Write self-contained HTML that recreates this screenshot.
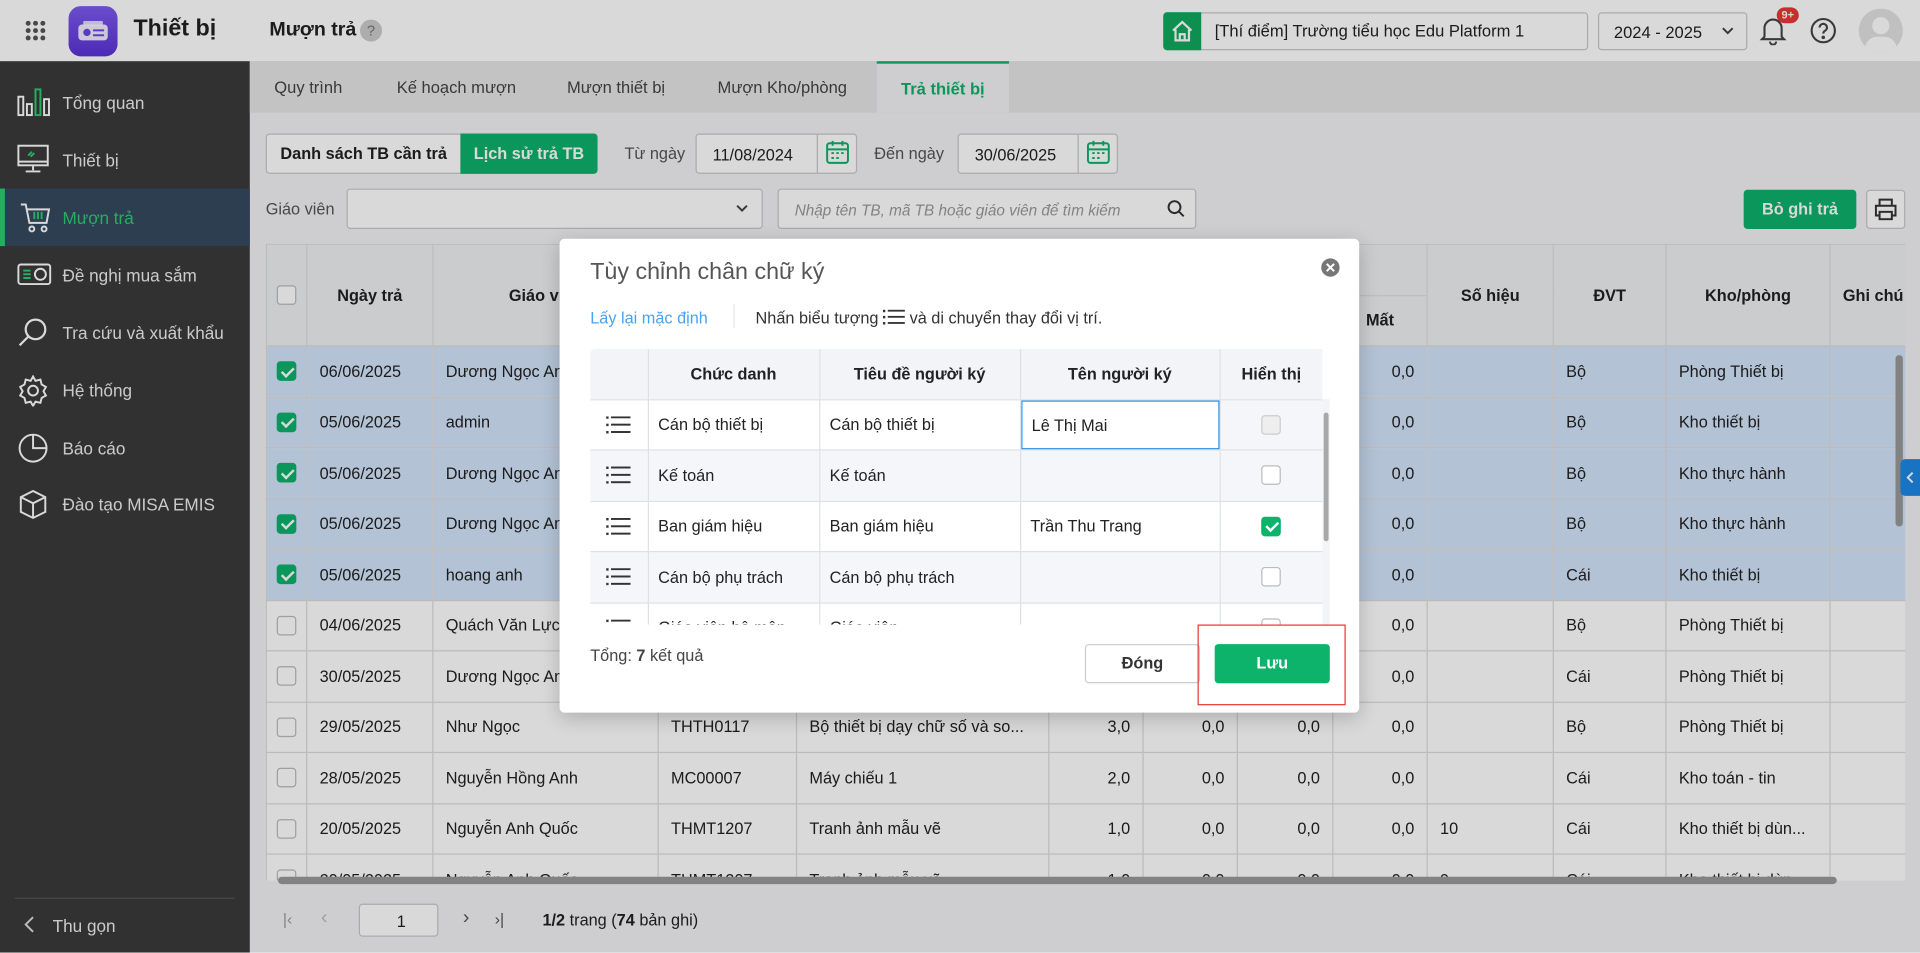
<!DOCTYPE html>
<html><head><meta charset="utf-8">
<style>
*{box-sizing:border-box;margin:0;padding:0}
html,body{width:1920px;height:953px;overflow:hidden;background:#f2f3f5}
body{font-family:"Liberation Sans","Noto Sans CJK SC",sans-serif;color:#222}
#root{position:absolute;left:0;top:0;width:1568px;height:778px;transform:scale(1.22449);transform-origin:0 0;overflow:hidden;font-size:13.3px;background:#f2f3f5}
.a{position:absolute}
.hdr{left:0;top:0;width:1568px;height:50px;background:#fff;box-shadow:0 1px 3px rgba(0,0,0,.15)}
.side{left:0;top:50px;width:204px;height:728px;background:#3a3a3a;color:#fff}
.si{position:absolute;left:0;width:204px;height:47px;display:flex;align-items:center;padding-left:51px;font-size:14px;color:#eee}
.si svg{position:absolute;left:14px;top:11px}
.tabs{left:204px;top:50px;width:1364px;height:42px;background:#e6e6e6}
.tab{position:absolute;top:0;height:42px;line-height:44px;font-size:13.5px;color:#444}
.inp{position:absolute;background:#fff;border:1px solid #c9c9c9;border-radius:3px;height:33px}
table{border-collapse:collapse;table-layout:fixed}
.bt td,.bt th{border:1px solid #dcdcdc;height:41.5px;padding:0 10px;white-space:nowrap;overflow:hidden;text-overflow:ellipsis;font-size:13.3px}
.bt td:first-child,.bt th:first-child{padding:0;text-align:center}
.bt th{background:#eef0f3;font-weight:bold;text-align:center}
.bt td.n{text-align:right}
.bt tr.sel td{background:#d3e4fb}
.bt tr td{background:#fff}
.cb{display:inline-block;width:16px;height:16px;border:1px solid #bbb;border-radius:3px;background:#fff;vertical-align:middle;position:relative}
.cb.on{background:#0db26b;border-color:#0db26b}
.cb.on:after{content:"";position:absolute;left:5px;top:1.5px;width:4px;height:8px;border:solid #fff;border-width:0 2px 2px 0;transform:rotate(45deg)}
.ov{left:0;top:0;width:1568px;height:778px;background:rgba(0,0,0,.15)}
.modal{left:457px;top:195px;width:653px;height:387px;background:#fff;border-radius:4px;box-shadow:0 4px 16px rgba(0,0,0,.2)}
.mt td,.mt th{border-bottom:1px solid #dde0e6;border-right:1px solid #dde0e6;height:41.5px;padding:0 8px;font-size:13.3px;white-space:nowrap;overflow:hidden}
.mt th{background:#f2f4f8;font-weight:bold;height:41px}
.mt tr.g td{background:#f5f6fa}
.hb{display:block;margin:0 auto;width:20px}
.btn{position:absolute;border-radius:3px;text-align:center;font-weight:bold;font-size:13.3px}
</style></head><body>
<div id="root">

<div class="a hdr">
 <svg class="a" style="left:20px;top:16px" width="18" height="18" viewBox="0 0 18 18" fill="#555"><circle cx="3" cy="3" r="2"/><circle cx="9" cy="3" r="2"/><circle cx="15" cy="3" r="2"/><circle cx="3" cy="9" r="2"/><circle cx="9" cy="9" r="2"/><circle cx="15" cy="9" r="2"/><circle cx="3" cy="15" r="2"/><circle cx="9" cy="15" r="2"/><circle cx="15" cy="15" r="2"/></svg>
 <div class="a" style="left:56px;top:5px;width:40px;height:41px;border-radius:10px;background:linear-gradient(180deg,#7d5cf0,#5b32d6)"></div>
 <svg class="a" style="left:63px;top:17px" width="26" height="17" viewBox="0 0 26 17"><rect x="1" y="3" width="24" height="13" rx="3" fill="#fff" opacity=".9"/><rect x="5" y="0" width="16" height="4" rx="1" fill="#fff" opacity=".8"/><circle cx="8" cy="9.5" r="3" fill="#6a46e2"/><rect x="13" y="7" width="9" height="1.6" fill="#6a46e2"/><rect x="13" y="11" width="9" height="1.6" fill="#6a46e2"/></svg>
 <div class="a" style="left:109px;top:13px;font-size:19px;font-weight:bold">Thiết bị</div>
 <div class="a" style="left:220px;top:16px;font-size:16px;font-weight:bold">Mượn trả</div>
 <div class="a" style="left:294px;top:16px;width:18px;height:18px;border-radius:9px;background:#ccc;color:#777;font-size:12px;text-align:center;line-height:18px">?</div>
 <div class="a" style="left:950px;top:10px;width:347px;height:31px;border:1px solid #c9c9c9;border-radius:3px;background:#fff"></div>
 <div class="a" style="left:950px;top:10px;width:31px;height:31px;background:#10a85f;border-radius:3px 0 0 3px"></div>
 <svg class="a" style="left:955px;top:15px" width="21" height="21" viewBox="0 0 21 21" fill="none" stroke="#fff" stroke-width="1.8"><path d="M3 10L10.5 3L18 10M5 9v9h11V9M8.5 18v-5h4v5"/></svg>
 <div class="a" style="left:992px;top:18px;font-size:13.5px">[Thí điểm] Trường tiểu học Edu Platform 1</div>
 <div class="a" style="left:1305px;top:10px;width:122px;height:31px;border:1px solid #c9c9c9;border-radius:3px;background:#fff;padding:8px 0 0 12px;font-size:13.5px">2024 - 2025</div>
 <svg class="a" style="left:1405px;top:21px" width="12" height="8" viewBox="0 0 12 8"><path d="M2 2l4 4 4-4" stroke="#444" stroke-width="1.6" fill="none"/></svg>
 <svg class="a" style="left:1437px;top:13px" width="22" height="24" viewBox="0 0 22 24" fill="none" stroke="#444" stroke-width="1.7"><path d="M4 17V10a7 7 0 0114 0v7l2 2H2z"/><path d="M8.5 21a2.5 2.5 0 005 0"/></svg>
 <div class="a" style="left:1451px;top:6px;width:18px;height:13px;border-radius:7px;background:#e53935;color:#fff;font-size:9px;text-align:center;line-height:13px;font-weight:bold">9+</div>
 <svg class="a" style="left:1478px;top:14px" width="22" height="22" viewBox="0 0 22 22" fill="none" stroke="#444" stroke-width="1.7"><circle cx="11" cy="11" r="9.5"/><path d="M8 8.5a3 3 0 115 2.2c-1.2.8-2 1.3-2 2.8"/><circle cx="11" cy="16.5" r=".6" fill="#444"/></svg>
 <div class="a" style="left:1518px;top:7px;width:36px;height:36px;border-radius:18px;background:#e2e2e2;overflow:hidden"><div style="position:absolute;left:11px;top:7px;width:14px;height:14px;border-radius:7px;background:#fff"></div><div style="position:absolute;left:5px;top:23px;width:26px;height:20px;border-radius:13px;background:#fff"></div></div>
</div>

<div class="a side">
 <div class="si" style="top:10px"><svg width="28" height="24" viewBox="0 0 28 24" fill="none" stroke="#fff" stroke-width="1.6"><rect x="1" y="8" width="4" height="15"/><rect x="8" y="14" width="4" height="9"/><rect x="15" y="2" width="4" height="21" stroke="#2ecc71"/><rect x="22" y="10" width="4" height="13"/></svg>Tổng quan</div>
 <div class="si" style="top:57px"><svg width="26" height="24" viewBox="0 0 26 24" fill="none" stroke="#fff" stroke-width="1.6"><rect x="1" y="1" width="24" height="16"/><path d="M1 14h24M13 17v4M7 22h12"/><path d="M9 9l3-3M11 10l3-3" stroke="#2ecc71"/></svg>Thiết bị</div>
 <div class="si" style="top:104px;background:#34495e;color:#2ecc71;border-left:4px solid #2ecc71;padding-left:47px"><svg style="left:12px" width="26" height="26" viewBox="0 0 26 26" fill="none" stroke="#fff" stroke-width="1.6"><path d="M1 2h4l3 15h14l2-11H6"/><circle cx="10" cy="22" r="2"/><circle cx="20" cy="22" r="2"/><path d="M12 8v6M15 8v6M18 8v6" stroke="#2ecc71"/></svg>Mượn trả</div>
 <div class="si" style="top:151px"><svg width="28" height="24" viewBox="0 0 28 24" fill="none" stroke="#fff" stroke-width="1.6"><rect x="1" y="4" width="26" height="16" rx="2"/><circle cx="19" cy="12" r="4.5"/><path d="M5 9h6M5 12h6M5 15h6" stroke="#2ecc71"/></svg>Đề nghị mua sắm</div>
 <div class="si" style="top:198px"><svg width="26" height="26" viewBox="0 0 26 26" fill="none" stroke="#fff" stroke-width="1.8"><circle cx="15" cy="10" r="8"/><path d="M9 16l-7 7"/></svg>Tra cứu và xuất khẩu</div>
 <div class="si" style="top:245px"><svg width="26" height="26" viewBox="0 0 26 26" fill="none" stroke="#fff" stroke-width="1.6"><circle cx="13" cy="13" r="4"/><path d="M13 1.5l2 3.5 4-1 1 4 3.5 2-2 3.5 2 3.5-3.5 2-1 4-4-1-2 3.5-2-3.5-4 1-1-4-3.5-2 2-3.5-2-3.5 3.5-2 1-4 4 1z"/></svg>Hệ thống</div>
 <div class="si" style="top:292px"><svg width="26" height="26" viewBox="0 0 26 26" fill="none" stroke="#fff" stroke-width="1.6"><circle cx="13" cy="13" r="11"/><path d="M13 2v11h11"/></svg>Báo cáo</div>
 <div class="si" style="top:338px"><svg width="26" height="26" viewBox="0 0 26 26" fill="none" stroke="#fff" stroke-width="1.6"><path d="M13 2l10 5v12l-10 5-10-5V7z M3 7l10 5 10-5M13 12v12"/></svg>Đào tạo MISA EMIS</div>
 <div class="a" style="left:12px;top:683px;width:180px;height:1px;background:#555"></div>
 <svg class="a" style="left:18px;top:697px" width="12" height="16" viewBox="0 0 12 16"><path d="M9 2L3 8l6 6" stroke="#ddd" stroke-width="1.6" fill="none"/></svg>
 <div class="a" style="left:43px;top:698px;font-size:14px;color:#eee">Thu gọn</div>
</div>

<div class="a tabs">
 <div class="tab" style="left:20px">Quy trình</div>
 <div class="tab" style="left:120px">Kế hoạch mượn</div>
 <div class="tab" style="left:259px">Mượn thiết bị</div>
 <div class="tab" style="left:382px">Mượn Kho/phòng</div>
 <div class="tab" style="left:512px;width:108px;background:#f2f3f5;border-top:2px solid #0db26b;text-align:center;color:#0db26b;font-weight:bold;line-height:42px">Trả thiết bị</div>
</div>

<div class="a" style="left:217px;top:109px;width:160px;height:33px;border:1px solid #c9c9c9;border-radius:3px 0 0 3px;background:#fff;font-weight:bold;text-align:center;line-height:31px">Danh sách TB cần trả</div>
<div class="a" style="left:376px;top:109px;width:112px;height:33px;background:#0db26b;border-radius:0 3px 3px 0;color:#fff;font-weight:bold;text-align:center;line-height:33px">Lịch sử trả TB</div>
<div class="a" style="left:510px;top:118px;color:#555">Từ ngày</div>
<div class="inp" style="left:568px;top:109px;width:132px;padding:9px 0 0 13px">11/08/2024</div>
<div class="a" style="left:667px;top:110px;width:1px;height:31px;background:#c9c9c9"></div>
<svg class="a" style="left:674px;top:114px" width="20" height="21" viewBox="0 0 20 21" fill="none" stroke="#0db26b" stroke-width="1.6"><rect x="1.5" y="3" width="17" height="16" rx="2"/><path d="M1.5 8h17M6 1v4M14 1v4M5 11h2M9 11h2M13 11h2M5 15h2M9 15h2"/></svg>
<div class="a" style="left:714px;top:118px;color:#555">Đến ngày</div>
<div class="inp" style="left:782px;top:109px;width:131px;padding:9px 0 0 13px">30/06/2025</div>
<div class="a" style="left:880px;top:110px;width:1px;height:31px;background:#c9c9c9"></div>
<svg class="a" style="left:887px;top:114px" width="20" height="21" viewBox="0 0 20 21" fill="none" stroke="#0db26b" stroke-width="1.6"><rect x="1.5" y="3" width="17" height="16" rx="2"/><path d="M1.5 8h17M6 1v4M14 1v4M5 11h2M9 11h2M13 11h2M5 15h2M9 15h2"/></svg>

<div class="a" style="left:217px;top:163px;color:#555">Giáo viên</div>
<div class="inp" style="left:283px;top:154px;width:340px"></div>
<svg class="a" style="left:600px;top:166px" width="12" height="8" viewBox="0 0 12 8"><path d="M2 2l4 4 4-4" stroke="#444" stroke-width="1.6" fill="none"/></svg>
<div class="inp" style="left:635px;top:154px;width:342px;padding:10px 0 0 13px;font-size:12.5px;color:#999;font-style:italic">Nhập tên TB, mã TB hoặc giáo viên để tìm kiếm</div>
<svg class="a" style="left:953px;top:163px" width="15" height="15" viewBox="0 0 17 17" fill="none" stroke="#333" stroke-width="1.8"><circle cx="7" cy="7" r="5.5"/><path d="M11 11l4.5 4.5"/></svg>
<div class="btn" style="left:1424px;top:155px;width:92px;height:32px;background:#0db26b;color:#fff;line-height:32px">Bỏ ghi trả</div>
<div class="a" style="left:1524px;top:155px;width:32px;height:32px;border:1px solid #c9c9c9;border-radius:3px;background:#fff"></div>
<svg class="a" style="left:1530px;top:161px" width="20" height="20" viewBox="0 0 20 20" fill="none" stroke="#333" stroke-width="1.6"><path d="M5 7V2h10v5M5 15H2V7h16v8h-3"/><rect x="5" y="12" width="10" height="6"/></svg>

<div class="a" style="left:217px;top:199px;width:1339px;height:520px;overflow:hidden;background:#fff">
<table class="bt" style="width:1339px">
<colgroup><col style="width:33px"><col style="width:103px"><col style="width:184px"><col style="width:113px"><col style="width:206px"><col style="width:77px"><col style="width:77px"><col style="width:78px"><col style="width:77px"><col style="width:103px"><col style="width:92px"><col style="width:134px"><col style="width:62px"></colgroup>
<tr><th rowspan="2" style="height:83px"><span class="cb"></span></th><th rowspan="2">Ngày trả</th><th rowspan="2">Giáo viên</th><th rowspan="2">Mã TB</th><th rowspan="2">Tên thiết bị</th><th rowspan="2">SL</th><th colspan="3">Tình trạng</th><th rowspan="2">Số hiệu</th><th rowspan="2">ĐVT</th><th rowspan="2">Kho/phòng</th><th rowspan="2" style="text-overflow:clip;text-align:left">Ghi chú</th></tr>
<tr><th>Tốt</th><th>Hỏng</th><th>Mất</th></tr>
<tr class="sel"><td><span class="cb on"></span></td><td>06/06/2025</td><td>Dương Ngọc Anh</td><td></td><td></td><td class="n">1,0</td><td class="n">1,0</td><td class="n">0,0</td><td class="n">0,0</td><td></td><td>Bộ</td><td>Phòng Thiết bị</td><td></td></tr>
<tr class="sel"><td><span class="cb on"></span></td><td>05/06/2025</td><td>admin</td><td></td><td></td><td class="n">1,0</td><td class="n">1,0</td><td class="n">0,0</td><td class="n">0,0</td><td></td><td>Bộ</td><td>Kho thiết bị</td><td></td></tr>
<tr class="sel"><td><span class="cb on"></span></td><td>05/06/2025</td><td>Dương Ngọc Anh</td><td></td><td></td><td class="n">1,0</td><td class="n">1,0</td><td class="n">0,0</td><td class="n">0,0</td><td></td><td>Bộ</td><td>Kho thực hành</td><td></td></tr>
<tr class="sel"><td><span class="cb on"></span></td><td>05/06/2025</td><td>Dương Ngọc Anh</td><td></td><td></td><td class="n">1,0</td><td class="n">1,0</td><td class="n">0,0</td><td class="n">0,0</td><td></td><td>Bộ</td><td>Kho thực hành</td><td></td></tr>
<tr class="sel"><td><span class="cb on"></span></td><td>05/06/2025</td><td>hoang anh</td><td></td><td></td><td class="n">1,0</td><td class="n">1,0</td><td class="n">0,0</td><td class="n">0,0</td><td></td><td>Cái</td><td>Kho thiết bị</td><td></td></tr>
<tr><td><span class="cb"></span></td><td>04/06/2025</td><td>Quách Văn Lực</td><td></td><td></td><td class="n">1,0</td><td class="n">0,0</td><td class="n">0,0</td><td class="n">0,0</td><td></td><td>Bộ</td><td>Phòng Thiết bị</td><td></td></tr>
<tr><td><span class="cb"></span></td><td>30/05/2025</td><td>Dương Ngọc Anh</td><td></td><td></td><td class="n">1,0</td><td class="n">0,0</td><td class="n">0,0</td><td class="n">0,0</td><td></td><td>Cái</td><td>Phòng Thiết bị</td><td></td></tr>
<tr><td><span class="cb"></span></td><td>29/05/2025</td><td>Như Ngọc</td><td>THTH0117</td><td>Bộ thiết bị dạy chữ số và so...</td><td class="n">3,0</td><td class="n">0,0</td><td class="n">0,0</td><td class="n">0,0</td><td></td><td>Bộ</td><td>Phòng Thiết bị</td><td></td></tr>
<tr><td><span class="cb"></span></td><td>28/05/2025</td><td>Nguyễn Hồng Anh</td><td>MC00007</td><td>Máy chiếu 1</td><td class="n">2,0</td><td class="n">0,0</td><td class="n">0,0</td><td class="n">0,0</td><td></td><td>Cái</td><td>Kho toán - tin</td><td></td></tr>
<tr><td><span class="cb"></span></td><td>20/05/2025</td><td>Nguyễn Anh Quốc</td><td>THMT1207</td><td>Tranh ảnh mẫu vẽ</td><td class="n">1,0</td><td class="n">0,0</td><td class="n">0,0</td><td class="n">0,0</td><td>10</td><td>Cái</td><td>Kho thiết bị dùn...</td><td></td></tr>
<tr><td><span class="cb"></span></td><td>20/05/2025</td><td>Nguyễn Anh Quốc</td><td>THMT1207</td><td>Tranh ảnh mẫu vẽ</td><td class="n">1,0</td><td class="n">0,0</td><td class="n">0,0</td><td class="n">0,0</td><td>9</td><td>Cái</td><td>Kho thiết bị dùn...</td><td></td></tr>
</table>
</div>
<div class="a" style="left:227px;top:716px;width:1273px;height:6px;border-radius:3px;background:#999"></div>
<div class="a" style="left:1548px;top:290px;width:6px;height:140px;border-radius:3px;background:#999"></div>
<div class="a" style="left:1552px;top:375px;width:16px;height:30px;background:#1e88e5;border-radius:4px 0 0 4px"></div>
<svg class="a" style="left:1556px;top:385px" width="8" height="10" viewBox="0 0 8 10"><path d="M6 1L2 5l4 4" stroke="#fff" stroke-width="1.6" fill="none"/></svg>

<div class="a" style="left:231px;top:743px;color:#999;font-size:13px">|&lsaquo;</div>
<div class="a" style="left:262px;top:741px;color:#bbb;font-size:16px">&lsaquo;</div>
<div class="inp" style="left:293px;top:738px;width:65px;height:27px;padding:6px 0 0 30px">1</div>
<div class="a" style="left:378px;top:741px;color:#555;font-size:16px">&rsaquo;</div>
<div class="a" style="left:404px;top:743px;color:#555;font-size:13px">&rsaquo;|</div>
<div class="a" style="left:443px;top:744px"><b>1/2</b> trang (<b>74</b> bản ghi)</div>

<div class="a ov"></div>

<div class="a modal">
 <div class="a" style="left:25px;top:17px;font-size:19px;color:#555">Tùy chỉnh chân chữ ký</div>
 <div class="a" style="left:622px;top:16px;width:15px;height:15px;border-radius:8px;background:#777"></div>
 <svg class="a" style="left:625px;top:19px" width="9" height="9" viewBox="0 0 9 9"><path d="M1.5 1.5l6 6M7.5 1.5l-6 6" stroke="#fff" stroke-width="1.6"/></svg>
 <div class="a" style="left:25px;top:57px;color:#4aa3f0">Lấy lại mặc định</div>
 <div class="a" style="left:142px;top:53px;width:1px;height:20px;background:#e3e3e3"></div>
 <div class="a" style="left:160px;top:57px;color:#333">Nhấn biểu tượng <svg width="18" height="14" viewBox="0 0 18 14" style="vertical-align:-2px" fill="#333"><rect x="0" y="1" width="2" height="2"/><rect x="4" y="1" width="14" height="1.5"/><rect x="0" y="6" width="2" height="2"/><rect x="4" y="6" width="14" height="1.5"/><rect x="0" y="11" width="2" height="2"/><rect x="4" y="11" width="14" height="1.5"/></svg> và di chuyển thay đổi vị trí.</div>
 <div class="a" style="left:25px;top:90px;width:604px;height:225px;overflow:hidden;border-radius:4px 4px 0 0">
 <table class="mt" style="width:598px">
 <colgroup><col style="width:47px"><col style="width:140px"><col style="width:164px"><col style="width:163px"><col style="width:84px"></colgroup>
 <tr><th></th><th>Chức danh</th><th>Tiêu đề người ký</th><th>Tên người ký</th><th style="border-right:0">Hiển thị</th></tr>
 <tr><td><svg class="hb" width="20" height="14" viewBox="0 0 20 14" fill="#333"><rect x="0" y="0" width="2" height="2"/><rect x="4" y="0" width="16" height="1.6"/><rect x="0" y="6" width="2" height="2"/><rect x="4" y="6" width="16" height="1.6"/><rect x="0" y="12" width="2" height="2"/><rect x="4" y="12" width="16" height="1.6"/></svg></td><td>Cán bộ thiết bị</td><td>Cán bộ thiết bị</td><td style="padding:0"><div style="height:40px;border:1px solid #1e88e5;padding:12px 8px">Lê Thị Mai</div></td><td style="background:#f5f6fa;text-align:center;border-right:0"><span class="cb" style="background:#eee;border-color:#ccc"></span></td></tr>
 <tr class="g"><td><svg class="hb" width="20" height="14" viewBox="0 0 20 14" fill="#333"><rect x="0" y="0" width="2" height="2"/><rect x="4" y="0" width="16" height="1.6"/><rect x="0" y="6" width="2" height="2"/><rect x="4" y="6" width="16" height="1.6"/><rect x="0" y="12" width="2" height="2"/><rect x="4" y="12" width="16" height="1.6"/></svg></td><td>Kế toán</td><td>Kế toán</td><td></td><td style="text-align:center;border-right:0"><span class="cb"></span></td></tr>
 <tr><td><svg class="hb" width="20" height="14" viewBox="0 0 20 14" fill="#333"><rect x="0" y="0" width="2" height="2"/><rect x="4" y="0" width="16" height="1.6"/><rect x="0" y="6" width="2" height="2"/><rect x="4" y="6" width="16" height="1.6"/><rect x="0" y="12" width="2" height="2"/><rect x="4" y="12" width="16" height="1.6"/></svg></td><td>Ban giám hiệu</td><td>Ban giám hiệu</td><td>Trần Thu Trang</td><td style="text-align:center;border-right:0"><span class="cb on"></span></td></tr>
 <tr class="g"><td><svg class="hb" width="20" height="14" viewBox="0 0 20 14" fill="#333"><rect x="0" y="0" width="2" height="2"/><rect x="4" y="0" width="16" height="1.6"/><rect x="0" y="6" width="2" height="2"/><rect x="4" y="6" width="16" height="1.6"/><rect x="0" y="12" width="2" height="2"/><rect x="4" y="12" width="16" height="1.6"/></svg></td><td>Cán bộ phụ trách</td><td>Cán bộ phụ trách</td><td></td><td style="text-align:center;border-right:0"><span class="cb"></span></td></tr>
 <tr><td><svg class="hb" width="20" height="14" viewBox="0 0 20 14" fill="#333"><rect x="0" y="0" width="2" height="2"/><rect x="4" y="0" width="16" height="1.6"/><rect x="0" y="6" width="2" height="2"/><rect x="4" y="6" width="16" height="1.6"/><rect x="0" y="12" width="2" height="2"/><rect x="4" y="12" width="16" height="1.6"/></svg></td><td>Giáo viên bộ môn</td><td>Giáo viên</td><td></td><td style="text-align:center;border-right:0"><span class="cb"></span></td></tr>
 </table>
 <div class="a" style="left:598px;top:41px;width:6px;height:184px;background:#f2f4f8"></div>
 <div class="a" style="left:599px;top:52px;width:4px;height:105px;border-radius:2px;background:#a8a8a8"></div>
 </div>
 <div class="a" style="left:25px;top:333px;color:#444">Tổng: <b>7</b> kết quả</div>
 <div class="btn" style="left:429px;top:331px;width:94px;height:32px;border:1px solid #ccc;background:#fff;line-height:30px;color:#333">Đóng</div>
 <div class="btn" style="left:535px;top:331px;width:94px;height:32px;background:#0db26b;color:#fff;line-height:32px">Lưu</div>
 <div class="a" style="left:521px;top:315px;width:121px;height:66px;border:1.5px solid #e53935"></div>
</div>

</div>
</body></html>
